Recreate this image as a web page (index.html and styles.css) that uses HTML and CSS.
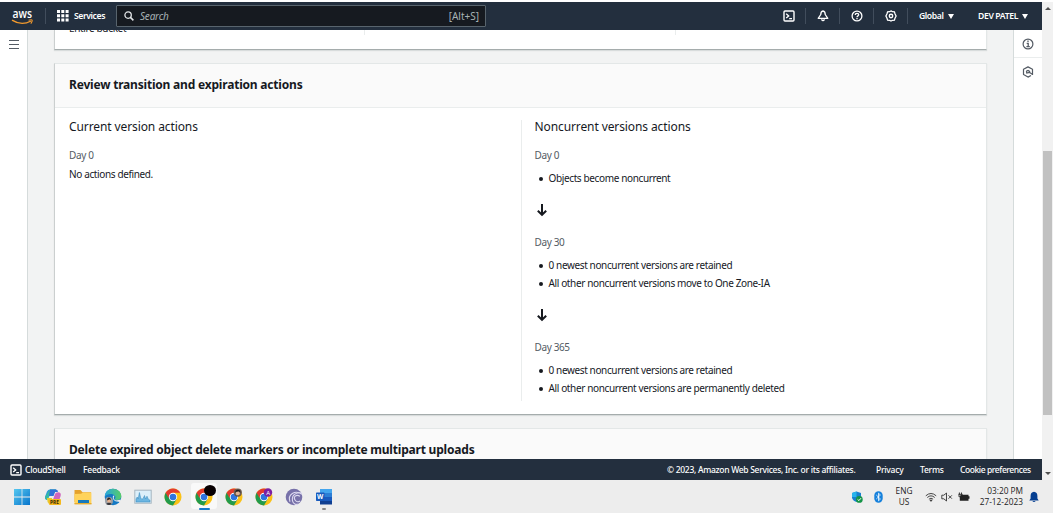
FILE: index.html
```html
<!DOCTYPE html>
<html lang="en">
<head>
<meta charset="utf-8">
<title>Create lifecycle rule</title>
<link rel="stylesheet" href="styles.css">
</head>
<body>
<svg class="defs" width="0" height="0">
  <symbol id="chrome" viewBox="0 0 18 18">
    <circle cx="9" cy="9" r="8.5" fill="#fbc116"/>
    <path d="M1.64 4.75A8.5 8.5 0 0 0 9 17.5L12.7 11.1 9 9z" fill="#229a4c"/>
    <path d="M1.64 4.75 5.3 11.1 9 9 9 4.75z" fill="#229a4c"/>
    <path d="M1.64 4.75A8.5 8.5 0 0 1 16.36 4.75H9L5 8.5 4.6 9.9z" fill="#e33b2e"/>
    <circle cx="9" cy="9" r="4.2" fill="#fff"/>
    <circle cx="9" cy="9" r="3.3" fill="#2f74df"/>
  </symbol>
  <symbol id="shell" viewBox="0 0 12 12">
    <rect x="1" y="1" width="10" height="10" rx="1" fill="none" stroke="currentColor" stroke-width="1.4"/>
    <path d="M3.2 3.7 5.7 5.9 3.2 8.1M6.2 8.6H9" fill="none" stroke="currentColor" stroke-width="1.3"/>
  </symbol>
  <symbol id="down" viewBox="0 0 12 16">
    <path d="M6 2V13M1.8 8.8 6 12.8 10.2 8.8" fill="none" stroke="#16191f" stroke-width="2"/>
  </symbol>
</svg>

<div class="browser">
  <div class="console">
    <header class="topbar">
      <svg class="aws" viewBox="0 0 24 18" width="24" height="18">
        <text x="1.6" y="9.7" class="aws-text" textLength="19.5" lengthAdjust="spacingAndGlyphs">aws</text>
        <path d="M1 12.2Q10.5 18.2 20 13" fill="none" stroke="#f29a2e" stroke-width="1.4"/>
        <path d="M17.6 12.2Q21 11.3 21.2 12.3T19.8 15.6" fill="none" stroke="#f29a2e" stroke-width="1.1"/>
      </svg>
      <span class="sep sep-logo"></span>
      <svg class="grid" viewBox="0 0 12 12" width="12" height="12" fill="#fff"><path d="M0 0h3v3H0zM4.3 0h3v3h-3zM8.6 0h3v3h-3zM0 4.3h3v3H0zM4.3 4.3h3v3h-3zM8.6 4.3h3v3h-3zM0 8.6h3v3H0zM4.3 8.6h3v3h-3zM8.6 8.6h3v3h-3z"/></svg>
      <span class="nav-text services">Services</span>
      <div class="search">
        <svg viewBox="0 0 10 10" width="10" height="10"><circle cx="4.1" cy="4.1" r="3.2" fill="none" stroke="#e3e6e8" stroke-width="1.3"/><path d="M6.4 6.4 9.4 9.4" stroke="#e3e6e8" stroke-width="1.5"/></svg>
        <span class="placeholder">Search</span>
        <span class="hint">[Alt+S]</span>
      </div>
      <div class="tools">
        <span class="tool"><svg width="12" height="12"><use href="#shell"/></svg></span>
        <span class="tool"><svg viewBox="0 0 12 12" width="12" height="12" fill="none" stroke="#fff" stroke-width="1.3"><path d="M6 1C4.4 1.2 3.8 2.5 3.8 4.5L1.2 8.3H10.8L8.2 4.5C8.2 2.5 7.6 1.2 6 1zM4.5 9.4Q6 12 7.5 9.4" stroke-linejoin="round"/></svg></span>
        <span class="tool"><svg viewBox="0 0 12 12" width="12" height="12" fill="none" stroke="#fff" stroke-width="1.3"><circle cx="6" cy="6" r="4.9"/><path d="M4.3 5Q4.3 3.3 6 3.3T7.7 4.8C7.7 5.9 6 5.8 6 7.2M6 8v1.2"/></svg></span>
        <span class="tool"><svg viewBox="0 0 12 12" width="12" height="12" fill="none" stroke="#fff"><path d="M6 .9 7.5 1.7 9.4 1.9 10 3.8 11.1 6 10 8.2 9.4 10.1 7.5 10.3 6 11.1 4.5 10.3 2.6 10.1 2 8.2.9 6 2 3.8 2.6 1.9 4.5 1.7z" stroke-width="1.3"/><circle cx="6" cy="6" r="1.7" stroke-width="1.4"/></svg></span>
      </div>
      <div class="region"><span class="nav-text global">Global</span><i class="caret"></i></div>
      <div class="account"><span class="nav-text user">DEV PATEL</span><i class="caret"></i></div>
    </header>

    <div class="workspace">
      <aside class="left-rail">
        <svg viewBox="0 0 10 9" width="10" height="9"><path d="M0 .5h10M0 4.5h10M0 8.5h10" stroke="#545b64" stroke-width="1.1"/></svg>
      </aside>
      <main class="content">
        <section class="card card-scope">
          <span class="scope-text">Entire bucket</span>
          <i class="scope-line"></i><i class="scope-line"></i>
        </section>
        <section class="card card-review">
          <h2 class="card-head"><span class="review-title">Review transition and expiration actions</span></h2>
          <div class="columns">
            <div class="column">
              <h3 class="current">Current version actions</h3>
              <p class="day">Day 0</p>
              <p class="none">No actions defined.</p>
            </div>
            <div class="column column-right">
              <h3 class="noncurrent">Noncurrent versions actions</h3>
              <p class="day">Day 0</p>
              <ul><li>Objects become noncurrent</li></ul>
              <svg class="arrow" width="12" height="16"><use href="#down"/></svg>
              <p class="day">Day 30</p>
              <ul><li>0 newest noncurrent versions are retained</li><li>All other noncurrent versions move to One Zone-IA</li></ul>
              <svg class="arrow" width="12" height="16"><use href="#down"/></svg>
              <p class="day">Day 365</p>
              <ul><li>0 newest noncurrent versions are retained</li><li>All other noncurrent versions are permanently deleted</li></ul>
            </div>
          </div>
        </section>
        <section class="card card-delete">
          <h2 class="card-head"><span class="delete-title">Delete expired object delete markers or incomplete multipart uploads</span></h2>
        </section>
      </main>
      <aside class="right-rail">
        <span class="rail-item"><svg viewBox="0 0 12 12" width="12" height="12" fill="none" stroke="#545b64"><circle cx="6" cy="6" r="4.9" stroke-width="1.2"/><path d="M6 2.6v1.5M4.7 5.3H6.2V8.6M4.4 8.7h3.4" stroke-width="1.3"/></svg></span>
        <span class="rail-item"><svg viewBox="0 0 12 12" width="12" height="12" fill="none" stroke="#545b64"><path d="M10.5 9V3.3L6 .9 1.5 3.3V8.6L6 11.1 9 9.5" stroke-width="1.2" stroke-linejoin="round"/><path d="M4.2 5.2 6 4.4 7.6 5.4V6.4L10.7 8.6M4.4 5.2 4.8 7 7.6 6.4" stroke-width="1.2"/></svg></span>
      </aside>
    </div>

    <footer class="footer">
      <svg class="foot-icon" width="12" height="12"><use href="#shell"/></svg>
      <span class="foot cloudshell">CloudShell</span>
      <span class="foot feedback">Feedback</span>
      <span class="foot copyright">© 2023, Amazon Web Services, Inc. or its affiliates.</span>
      <span class="foot privacy">Privacy</span>
      <span class="foot terms">Terms</span>
      <span class="foot cookies">Cookie preferences</span>
    </footer>
  </div>
  <div class="scrollbar"><i class="scroll-up"></i><i class="thumb"></i><i class="scroll-down"></i></div>
</div>

<div class="taskbar">
  <div class="apps">
    <span class="app"><svg viewBox="0 0 18 18" width="18" height="18"><defs><linearGradient id="win" x2="1" y2="1"><stop stop-color="#55c8f0"/><stop offset="1" stop-color="#0874cb"/></linearGradient></defs><path d="M1 1h7.6v7.6H1zM9.4 1H17v7.6H9.4zM1 9.4h7.6V17H1zM9.4 9.4H17V17H9.4z" fill="url(#win)"/></svg></span>
    <span class="app"><svg viewBox="0 0 18 18" width="18" height="18"><path d="M6 1.5h6L9 8H5L3 12Q0 11 1.5 7.5L3 3.5Q4 1.5 6 1.5z" fill="#2797dc"/><path d="M6 1.5h6L10.5 5H7L4.5 10 3 12Q0 11 1.5 8z" fill="#36b8a3"/><path d="M6 1.5h6Q14 1.8 14 4H11L9.5 8H5z" fill="#3170d9"/><path d="M14 4.2Q17.6 4.5 16.6 8L15 13H8.5L11 6Q11.6 4.2 14 4.2z" fill="#cf64be"/><path d="M3 10h5v6H5Q3 14 3 10z" fill="#e8c92c"/><rect x="5" y="11" width="12" height="6" rx="1" fill="#f5b91f"/><text x="6" y="16" class="pre">PRE</text></svg></span>
    <span class="app"><svg viewBox="0 0 18 18" width="18" height="18"><path d="M.5 2h6l2 2.2H17V14H.5z" fill="#e5a22c"/><path d="M.5 6 7 5.8 9 4.6h8.4V16H.5z" fill="#ffd35b"/><path d="M4 12h11v4H4z" fill="#1679bd"/><path d="M.5 15h17v1.4H.5z" fill="#e8ac2f"/></svg></span>
    <span class="app"><svg viewBox="0 0 18 18" width="18" height="18"><defs><linearGradient id="edge" x2="1"><stop stop-color="#27a6df"/><stop offset="1" stop-color="#57cd65"/></linearGradient></defs><circle cx="9" cy="9" r="8.3" fill="#1479c4"/><path d="M.8 8.5C1 3.5 4.5.6 9 .7c5 .1 8.4 3.6 8.3 7.4 0 3-2.2 4.3-4.5 4.1-2-.2-2.5-.9-1.5-2.1C12.2 7.8 9.5 6 6.7 6 4 6 1.8 7 .8 8.5z" fill="url(#edge)"/><path d="M10.5 7.8Q8.3 11 12 12.6L17.4 11.6 16 14 11.5 13.3Q8 11.5 9 7.8z" fill="#ededed"/><circle cx="5" cy="13" r="4" fill="#9a9fa5"/><circle cx="5" cy="12.7" r="2" fill="#e6b28e"/><path d="M3 12.5C3 8.5 7 8.7 7 12.5L5.8 11.3z" fill="#302624"/><path d="M2.2 16Q5 13.6 7.8 16 5 18.2 2.2 16z" fill="#353439"/></svg></span>
    <span class="app"><svg viewBox="0 0 18 18" width="18" height="18"><rect x=".8" y="2.2" width="16.4" height="13" fill="#dceffa" stroke="#a6b6c1"/><path d="M2 14V11l1.2-2 1 2L5.4 4.5 6.6 9.5 7.8 11.5 9.4 10 10.5 7.5 11.5 11l1.5-2.8 1.3 3 1.7 1V14z" fill="#6cb6e2" stroke="#3587b9" stroke-width=".5"/></svg></span>
    <span class="app"><svg width="18" height="18"><use href="#chrome"/></svg></span>
    <span class="app active"><svg width="18" height="18"><use href="#chrome"/></svg><i class="blot"></i></span>
    <span class="app"><svg viewBox="0 0 18 18" width="18" height="18"><use href="#chrome"/><circle cx="12.8" cy="4.5" r="4.1" fill="#6c5b50"/><circle cx="12.8" cy="5" r="2.2" fill="#deb394"/><path d="M10.4 5Q10 1.6 13 1.7 16 1.9 15.2 5L14 3.5 11.5 3.7zM9.7 7Q12.8 9.5 16 7 13 10 9.7 7z" fill="#211d1d"/></svg></span>
    <span class="app"><svg viewBox="0 0 18 18" width="18" height="18"><use href="#chrome"/><circle cx="13" cy="4.5" r="4.2" fill="#7b1fa2"/><text x="11.2" y="6.5" class="badge-a">A</text></svg></span>
    <span class="app"><svg viewBox="0 0 18 18" width="18" height="18" fill="none"><circle cx="9" cy="9" r="8.3" fill="#7771a9"/><path d="M17 6.2C10 1.5 2.2 6.5 5 13.8M16.7 5C12 4 6.3 6.5 7.5 12.8 8.3 15.8 11 17 13 16M15 8.3C11 6 8 9 10 12c1.3 2 3.5 2.2 5 1" stroke="#dddaf0" stroke-width="1.1"/></svg></span>
    <span class="app word"><svg viewBox="0 0 18 18" width="18" height="18"><path d="M5 1h12v4H5z" fill="#43a5ee"/><path d="M5 5h12v4H5z" fill="#2c7ed5"/><path d="M5 9h12v4H5z" fill="#195abe"/><path d="M5 13h12v3.5H5z" fill="#103f91"/><rect x="1" y="4.5" width="8.5" height="8.5" rx=".7" fill="#185abd"/><text x="2" y="11.2" class="word-text">W</text></svg></span>
  </div>
  <div class="tray">
    <svg class="shield" viewBox="0 0 12 12" width="12" height="12"><path d="M1 2 5.5.6 10 2v4.4Q9.5 9.5 5.5 11 1.5 9.5 1 6.4z" fill="#1880cf"/><path d="M1 2 5.5.6V6H1zM5.5 6H10q0 4-4.5 5z" fill="#27b4ec"/><circle cx="8.3" cy="8.4" r="3.4" fill="#149447"/><path d="M6.6 8.4 7.9 9.6 10 7.2" fill="none" stroke="#fff" stroke-width="1"/></svg>
    <svg class="bluetooth" viewBox="0 0 9 12" width="9" height="12"><rect x=".3" y=".3" width="8.4" height="11.4" rx="4.2" fill="#1681dc"/><path d="M2.3 4 6.4 8 4.5 9.8V2.2L6.4 4 2.3 8" fill="none" stroke="#fff" stroke-width=".8"/></svg>
    <span class="lang"><span class="eng">ENG</span><span class="us">US</span></span>
    <svg class="wifi" viewBox="0 0 12 10" width="12" height="10" fill="none" stroke="#333" stroke-width=".9"><path d="M.8 3.8Q6-.8 11.2 3.8M2.3 5.5Q6 2.2 9.7 5.5M3.9 7.2Q6 5.2 8.1 7.2"/><circle cx="6" cy="8.5" r=".7" fill="#333"/></svg>
    <svg class="mute" viewBox="0 0 12 10" width="12" height="10" fill="none" stroke="#333" stroke-width=".9"><path d="M.8 3.2h2L5.5 1v8L2.8 6.8h-2zM7.5 3.3l3.4 3.4M10.9 3.3 7.5 6.7"/></svg>
    <svg class="battery" viewBox="0 0 12 10" width="12" height="10"><path d="M2.5 2.8h8v1.5h1v2.4h-1V8.7H1.8V6z" fill="#222"/><path d="M.5 2.3h4M1.4.5v2M3.5.5v2M1 2.5v2.3h3V2.5M2.5 4.5v3" fill="none" stroke="#222" stroke-width=".9"/></svg>
    <span class="clock"><span class="time">03:20 PM</span><span class="date">27-12-2023</span></span>
    <svg class="bell" viewBox="0 0 10 12" width="10" height="12"><path d="M5 .8Q8.4 1.2 8.4 5V7.5L9.7 9.4H.3L1.6 7.5V5Q1.6 1.2 5 .8zM3.3 10H6.7Q5 12.2 3.3 10z" fill="#063f91"/></svg>
  </div>
</div>
</body>
</html>
```
FILE: styles.css
```css
* { box-sizing: border-box; }
body { margin: 0; width: 1053px; height: 513px; overflow: hidden; background: #fff; font-family: "Noto Sans", sans-serif; color: #16191f; display: flex; flex-direction: column; }
h2, h3, p, ul { margin: 0; padding: 0; font-weight: 400; }
svg { display: block; flex: none; }
span { white-space: nowrap; }
.defs { position: absolute; }
.browser { display: flex; height: 480px; padding-top: 2px; flex: none; }
.console { width: 1042px; height: 478px; display: flex; flex-direction: column; }

.topbar { height: 28px; flex: none; background: #232f3e; color: #fff; display: flex; align-items: center; }
.aws { margin: 1px 0 0 11px; overflow: visible; }
.aws-text { font: 600 12.5px "Open Sans", sans-serif; fill: #fff; }
.sep { width: 1px; height: 16px; background: #414d5c; }
.sep-logo { margin: 0 11px 0 10px; }
.nav-text { font-size: 8.6px; font-weight: 600; line-height: 14px; letter-spacing: -0.4px; flex: none; }
.services { margin-left: 5px; width: 42px; }
.search { width: 370px; height: 22px; border: 1px solid #58646d; border-radius: 1px; background: #161a20; display: flex; align-items: center; padding: 0 6px 0 7px; }
.placeholder { margin-left: 6px; font-size: 10px; line-height: 14px; font-style: italic; letter-spacing: -0.2px; color: #a6b2b4; }
.hint { margin-left: auto; font-size: 10px; line-height: 14px; color: #a6b2b4; }
.tools { margin-left: 286px; display: flex; }
.tool { width: 34px; height: 16px; border-right: 1px solid #414d5c; display: flex; align-items: center; justify-content: center; }
.region { width: 59px; margin-left: 11px; display: flex; align-items: center; }
.account { display: flex; align-items: center; }
.global { width: 29px; }
.user { width: 44px; letter-spacing: -0.35px; }
.caret { border: 3px solid transparent; border-top: 5px solid #fff; border-bottom: 0; }

.workspace { height: 429px; flex: none; display: flex; background: #f2f3f3; overflow: hidden; }
.left-rail { width: 28px; background: #fff; border-right: 1px solid #d5dbdb; padding: 10px 0 0 9px; }
.content { width: 985px; padding: 0 26px; }
.right-rail { width: 29px; background: #fff; border-left: 1px solid #d5dbdb; }
.rail-item { height: 28px; display: flex; align-items: center; justify-content: center; border-bottom: 1px solid #eaeded; }
.rail-item + .rail-item { border: 0; }

.card { background: #fff; border: 1px solid #e3e7e7; border-left-color: #cbcfcf; border-bottom-color: #a5acac; box-shadow: 0 1px 1px #d8dcdc; }
.card-scope { height: 20px; border-top: 0; overflow: hidden; display: flex; }
.scope-text { width: 310px; padding-left: 14px; margin-top: -9px; font-size: 10px; letter-spacing: -0.36px; line-height: 14px; }
.scope-line { width: 1px; height: 5px; background: #eaeded; margin-right: 310px; }
.card-review { height: 352px; margin-top: 13px; }
.card-delete { height: 60px; margin-top: 13px; }
.card-head { height: 44px; padding: 0 14px 1px; background: #fafafa; border-bottom: 1px solid #eaeded; display: flex; align-items: center; font-size: 12px; font-weight: 700; line-height: 18px; letter-spacing: -0.2px; }
.columns { display: flex; height: 281px; margin-top: 12px; }
.column { width: 466px; padding-left: 14px; }
.column-right { border-left: 1px solid #eaeded; padding-left: 13px; }
h3 { font-size: 12px; line-height: 14px; letter-spacing: -0.1px; }
.day, .none, ul { font-size: 10px; letter-spacing: -0.37px; }
.day { line-height: 14px; margin-top: 14px; color: #545b64; }
.none { line-height: 14px; margin-top: 5px; }
ul { margin-top: 7px; line-height: 18px; list-style: none; }
li { display: flex; align-items: center; }
li::before { content: ""; width: 4px; height: 4px; margin: 1px 6px 0 4px; border-radius: 50%; background: #16191f; }
.arrow { margin: 15px 0 0 1px; }
.arrow + .day { margin-top: 17px; }

.footer { height: 21px; flex: none; background: #232f3e; color: #fff; display: flex; align-items: center; padding-left: 10px; }
.foot { font-size: 8.5px; line-height: 14px; font-weight: 500; letter-spacing: -0.24px; flex: none; }
.cloudshell { margin-left: 3px; width: 58px; }
.feedback { width: 584px; }
.copyright { width: 209px; letter-spacing: -0.29px; }
.privacy { width: 44px; }
.terms { width: 40px; }
.cookies { letter-spacing: -0.42px; }

.scrollbar { width: 11px; background: #f1f1f1; display: flex; flex-direction: column; align-items: center; }
.scroll-up { margin-top: 5px; border: 3px solid transparent; border-bottom: 3px solid #505050; border-top: 0; }
.thumb { width: 9px; height: 264px; margin-top: 141px; background: #c1c1c1; }
.scroll-down { margin-top: 57px; border: 3px solid transparent; border-top: 3px solid #505050; border-bottom: 0; }

.taskbar { height: 33px; flex: none; background: #ededed; display: flex; justify-content: space-between; }
.apps { display: flex; padding-left: 7.4px; }
.app { width: 30.2px; height: 33px; display: flex; align-items: center; justify-content: center; position: relative; }
.active::before { content: ""; position: absolute; inset: 3px 2px 4px; background: #f9f9f9; border-radius: 3px; }
.active svg { position: relative; }
.active::after { content: ""; position: absolute; left: 10px; bottom: 3px; width: 11px; height: 2px; border-radius: 1px; background: #1679c8; }
.blot { position: absolute; left: 15px; top: 5px; width: 12px; height: 11px; border-radius: 50%; background: #080002; }
.word::after { content: ""; position: absolute; left: 13px; bottom: 3px; width: 4px; height: 2px; border-radius: 1px; background: #888; }
.pre { font: 700 4.8px "Open Sans", sans-serif; fill: #342405; }
.badge-a { font: 6px "Open Sans", sans-serif; fill: #fff; }
.word-text { font: 700 6.5px "Open Sans", sans-serif; fill: #fff; }
.tray { display: flex; align-items: center; width: 202px; color: #1c1c1c; font: 8.3px/11px "Open Sans", sans-serif; }
.bluetooth { margin-left: 11px; }
.lang { margin: -1px 0 0 10px; width: 22px; display: flex; flex-direction: column; align-items: center; }
.wifi { margin-left: 10px; }
.mute { margin-left: 4px; }
.battery { margin-left: 5px; }
.clock { width: 54px; margin: -1px 0 0 -1px; display: flex; flex-direction: column; align-items: flex-end; }
.bell { margin-left: 6px; }
```
